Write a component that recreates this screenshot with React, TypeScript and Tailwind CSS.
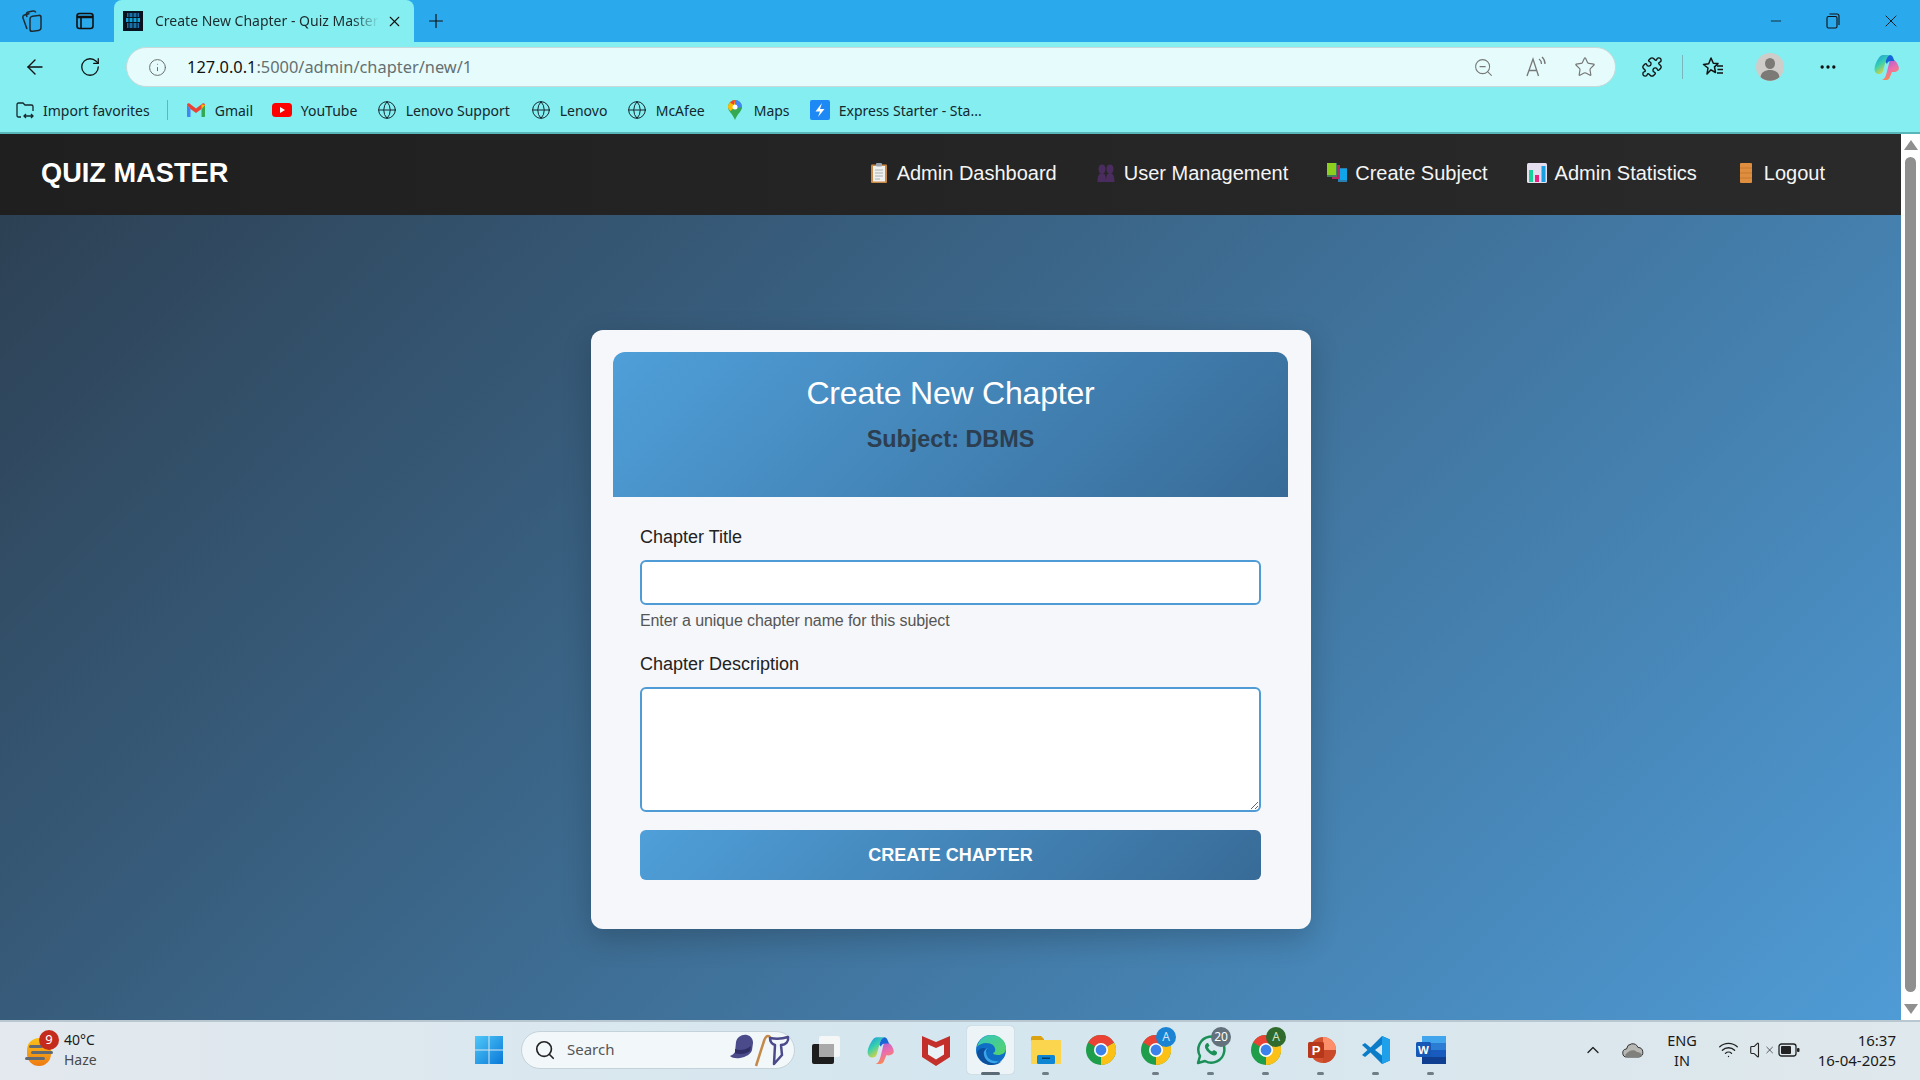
import React from "react";
import {
  ArrowLeft,
  ChevronUp,
  Globe,
  Info,
  Minus,
  MoreHorizontal,
  Plus,
  Puzzle,
  RotateCw,
  Search,
  Star,
  Volume,
  Wifi,
  X,
  ZoomOut,
} from "lucide-react";

const uiFont = "font-['Noto_Sans','Open_Sans',sans-serif]";

// Browser chrome drawings
const Workspaces = () => (
  <svg width="24" height="24" viewBox="0 0 24 24" fill="none" stroke="#1c2b33" strokeWidth="1.5">
    <rect x="10" y="6" width="11" height="15" rx="2.5" transform="skewY(-8) translate(0 3)" />
    <path d="M7 20 3 9c-.5-1.400.2-2.600 1.500-3l5-1.500" />
    <path d="M7 8 6.500 6c-.3-1.400.5-2.600 1.800-3l4.500-1c1.300-.3 2.500.3 3 1.500" />
  </svg>
);

const TabPanel = () => (
  <svg width="20" height="20" viewBox="0 0 20 20" fill="none" stroke="#111" strokeWidth="1.6">
    <rect x="2" y="2.500" width="16" height="15" rx="2.500" />
    <path d="M2 6h16" strokeWidth="2.500" />
    <path d="M6 6.500v11" />
  </svg>
);

const RestoreIcon = () => (
  <svg width="14" height="16" viewBox="0 0 14 16" fill="none" stroke="#111" strokeWidth="1.1">
    <rect x="1" y="3.500" width="10" height="11.500" rx="1.500" />
    <path d="M3.500 1h7.500c1.200 0 2 .8 2 2v9" />
  </svg>
);

const Favicon = () => (
  <svg width="20" height="20" viewBox="0 0 20 20">
    <rect width="20" height="20" fill="#07141f" />
    <rect x="4" y="2" width="12" height="4" fill="#1a6fa8" />
    <rect x="3" y="7" width="14" height="4" fill="#14a0d8" />
    <rect x="4" y="12" width="12" height="5" fill="#1a6fa8" />
    <path d="M6 2v15M10 2v15M14 2v15" stroke="#07141f" strokeWidth="1" />
  </svg>
);

const ReadAloud = () => (
  <svg width="24" height="24" viewBox="0 0 24 24" fill="none" stroke="#777" strokeWidth="1.300">
    <path d="M3 21 9 4l5.500 17M5 15.500h8" />
    <path d="M15 4c1.500 1 2.500 3 2.500 5M18 2c1.800 1.500 3 4 3 7" />
  </svg>
);

const FavoritesIcon = () => (
  <svg width="24" height="24" viewBox="0 0 24 24" fill="none" stroke="#111" strokeWidth="1.500">
    <path d="M10 3l2.300 5.200 4.700.4-3.500 3.300 1 5.600-4.500-2.700L6 19l1-6-4.500-3.500 5.200-.8z" strokeLinejoin="round" />
    <path d="M16 11h6M16.500 14.500H22M16 18h6" />
  </svg>
);

const ProfileIcon = () => (
  <svg width="28" height="28" viewBox="0 0 28 28">
    <circle cx="14" cy="14" r="14" fill="#cfcdc9" />
    <ellipse cx="14" cy="10.500" rx="5" ry="5.500" fill="#7c7a77" />
    <path d="M4.500 24c.8-5 4.500-7 9.500-7s8.700 2 9.500 7a14 14 0 0 1-19 0z" fill="#7c7a77" />
  </svg>
);

const CopilotIcon = ({ size = 28 }: { size?: number }) => (
  <svg width={size} height={size} viewBox="0 0 28 28">
    <defs>
      <linearGradient id="cpA" x1="0" y1="0" x2="0.600" y2="1">
        <stop offset="0" stopColor="#1b8fe8" />
        <stop offset="0.500" stopColor="#36d0b0" />
        <stop offset="1" stopColor="#f4d32f" />
      </linearGradient>
      <linearGradient id="cpB" x1="0" y1="0" x2="0.400" y2="1">
        <stop offset="0" stopColor="#a25be0" />
        <stop offset="0.600" stopColor="#ee6fa9" />
        <stop offset="1" stopColor="#f98b4a" />
      </linearGradient>
    </defs>
    <path d="M10 2h7c-2.500 1-3.500 3-4.500 7l-2.500 9c-.5 2-2 3-4 3-2.500 0-4.500-2-4.500-5 0-2 .5-4 1.500-6C5 6 7 2 10 2z" fill="url(#cpA)" />
    <path d="M18 7c3-.5 5 1 6.500 4 1.500 3 2 5 .5 6.500-2 2-4 1.500-6 1.500l-2.500 6c-.8 1.500-2 2-3.500 2h-4c2.500-1 3.500-3 4.500-6.500l2-8C16 10 16.500 7.500 18 7z" fill="url(#cpB)" />
    <path d="M12.500 9c1-4 2-6 4.500-7 1.500 0 2.500 1 3 2.500L21.500 8H18c-2 0-3.500 1-4 3z" fill="#1666d8" />
  </svg>
);

// Bookmark bar drawings
const ImportIcon = () => (
  <svg width="20" height="20" viewBox="0 0 20 20" fill="none" stroke="#14282e" strokeWidth="1.300">
    <path d="M6 17H3.500C2.500 17 2 16.500 2 15.500v-11C2 3.500 2.500 3 3.500 3H8l2 2h6.500c1 0 1.500.5 1.500 1.500V11" />
    <path d="M9 16h9M11 14l-2 2 2 2M16 14l2 2-2 2" />
  </svg>
);

const GmailIcon = () => (
  <svg width="20" height="20" viewBox="0 0 20 20">
    <path d="M1 5v11c0 .6.400 1 1 1h2.500V9z" fill="#4285f4" />
    <path d="M19 5v11c0 .6-.4 1-1 1h-2.500V9z" fill="#34a853" />
    <path d="M1 5c0-1.500 1.700-2.200 2.800-1.300L10 8.500l6.200-4.800C17.300 2.800 19 3.500 19 5l-3.500 4L10 13 4.500 9z" fill="#ea4335" />
    <path d="M15.500 4.300 19 5l-3.500 4z" fill="#fbbc04" />
  </svg>
);

const YoutubeIcon = () => (
  <svg width="20" height="20" viewBox="0 0 20 20">
    <rect y="3" width="20" height="14" rx="3.500" fill="#f00" />
    <path d="M8 7l5 3-5 3z" fill="#fff" />
  </svg>
);

const MapsIcon = () => (
  <svg width="16" height="20" viewBox="0 0 16 20">
    <path d="M8 0a7 7 0 0 1 7 7c0 4-4 6-7 13C5 13 1 11 1 7a7 7 0 0 1 7-7z" fill="#34a853" />
    <path d="M3 2.500A7 7 0 0 1 8 0v7L3.500 11C2 9.800 1 8.500 1 7c0-1.700.8-3.300 2-4.500z" fill="#fbbc04" />
    <path d="M3 2.500A7 7 0 0 1 8 0l-1 5z" fill="#ea4335" />
    <path d="M8 0a7 7 0 0 1 7 7l-5 1-2-3z" fill="#4285f4" />
    <circle cx="8" cy="7" r="2.500" fill="#fff" />
  </svg>
);

const ExpressIcon = () => (
  <svg width="20" height="20" viewBox="0 0 20 20">
    <rect width="20" height="20" rx="2" fill="#1e88f5" />
    <path d="M12 3 5.500 11.500H10L8 17l6.500-8H10z" fill="#fff" />
  </svg>
);

// Navbar emoji drawings
const ClipboardEmoji = () => (
  <svg width="18" height="20" viewBox="0 0 18 20">
    <rect x="1" y="1.500" width="16" height="18.500" rx="1" fill="#c98a45" />
    <rect x="3" y="3" width="12" height="15.500" fill="#f1f1ef" />
    <rect x="6" y="0" width="6" height="3.500" rx="1" fill="#9aa3ad" />
    <path d="M5 7h8M5 10h8M5 13h8M5 16h5" stroke="#a9b0b8" strokeWidth="1" />
  </svg>
);

const UsersEmoji = () => (
  <svg width="20" height="20" viewBox="0 0 20 20" fill="#4b2c5e">
    <ellipse cx="6" cy="6" rx="3.500" ry="4.500" />
    <ellipse cx="14" cy="6" rx="3.500" ry="4.500" />
    <path d="M1.500 19c0-5 1-9 4.500-9s4 4 4 9zM10 19c0-5 .5-9 4-9s4.500 4 4.500 9z" />
  </svg>
);

const BooksEmoji = () => (
  <svg width="20" height="20" viewBox="0 0 20 20">
    <rect x="11" y="5" width="9" height="14" fill="#2a7fb0" />
    <rect x="13" y="6" width="7" height="11" fill="#10a5e8" />
    <rect x="5" y="2" width="8" height="14" fill="#b3265f" />
    <rect x="0" y="0" width="10" height="14" fill="#3f7f5f" />
    <rect x="0" y="0" width="9" height="12" fill="#8ccf1e" />
  </svg>
);

const ChartEmoji = () => (
  <svg width="20" height="20" viewBox="0 0 20 20">
    <rect width="20" height="20" rx="1.500" fill="#e4deef" />
    <rect x="2" y="7" width="4" height="12" fill="#16d39a" />
    <rect x="8" y="12" width="4" height="7" fill="#e8237f" />
    <rect x="14.500" y="3" width="4" height="16" fill="#1a9fe0" />
  </svg>
);

const DoorEmoji = () => (
  <svg width="12" height="20" viewBox="0 0 12 20">
    <rect width="12" height="20" rx="1" fill="#de8e3e" />
    <path d="M0 5h12M0 10h12M0 15h12" stroke="#c27528" strokeWidth="0.800" />
  </svg>
);

// Taskbar drawings
const WindowsLogo = () => (
  <svg width="30" height="30" viewBox="0 0 30 30">
    <defs>
      <linearGradient id="winA" x1="0" y1="0" x2="1" y2="1">
        <stop offset="0" stopColor="#4fc8f8" />
        <stop offset="1" stopColor="#0a78d8" />
      </linearGradient>
    </defs>
    <path d="M1 1h13.500v13.500H1zM15.500 1H29v13.500H15.500zM1 15.500h13.500V29H1zM15.500 15.500H29V29H15.500z" fill="url(#winA)" />
  </svg>
);

const SearchDecor = () => (
  <svg width="62" height="34" viewBox="0 0 62 34">
    <path d="M7 9c1-5 6-8 11-7 4 1 6 4 6 8l-1 7c-1 4-6 7-12 8-4 .6-8 0-10-2 2-1 4-2 5-4z" fill="#4b4a8a" />
    <path d="M6 16c5 2 11 1 16-3l-1 5c-4 3-10 4-15 2z" fill="#2f2e66" />
    <path d="M27 33 35 8c1-3 2-5 4-5s3 2 2 4" fill="none" stroke="#c48a4a" strokeWidth="2.500" />
    <path d="M41 5c5 1 12 1 18-1 1 4-2 8-7 8l1 10-8 9 1-19c-3-1-5-4-5-7z" fill="none" stroke="#4b4a8a" strokeWidth="2.500" strokeLinejoin="round" />
  </svg>
);

const TaskView = () => (
  <svg width="30" height="30" viewBox="0 0 30 30">
    <rect x="1" y="9" width="22" height="20" rx="2" fill="#1d1d1d" />
    <rect x="8" y="1" width="21" height="21" rx="2" fill="#f5f6f6" />
    <rect x="8" y="9" width="15" height="13" fill="#a9a9a9" />
  </svg>
);

const McAfee = () => (
  <svg width="28" height="32" viewBox="0 0 28 32">
    <path d="M0 2l14 6 14-6v21l-14 9-14-9z" fill="#c32f2b" />
    <path d="M6 10.500l8 3.500 8-3.500v10L14 25.500 6 20.500z" fill="#e8f2f7" />
  </svg>
);

const Edge = () => (
  <svg width="32" height="32" viewBox="0 0 32 32">
    <defs>
      <linearGradient id="edgeA" x1="0" y1="0" x2="1" y2="1">
        <stop offset="0" stopColor="#36c5c0" />
        <stop offset="1" stopColor="#54d466" />
      </linearGradient>
    </defs>
    <circle cx="16" cy="16" r="15" fill="#0f6fc6" />
    <path d="M2 13C4 5 10 1 16 1c9 0 15 6 15 13 0 5-4 7-8 7-3 0-5-1-5-2 3-1 3-5 0-8-4-3-12-3-16 2z" fill="url(#edgeA)" />
    <path d="M13 16c-4 2-4 9 1 12 4 2 9 2 13-1-3 3-7 4-11 4C8 31 2 24 2 18c3-5 8-5 11-2z" fill="#0b4f9e" />
    <path d="M14 14c-2 0-4 3-2 8 1 3 6 6 12 5l-3 2c-6 1-11-3-12-8-1-4 2-7 5-7z" fill="#3aa6e8" />
  </svg>
);

const Files = () => (
  <svg width="30" height="30" viewBox="0 0 30 30">
    <path d="M0 3c0-1 .5-2 2-2h8l3 3v6H0z" fill="#dba10e" />
    <rect y="5" width="30" height="24" rx="1" fill="#fbd54e" />
    <rect x="6" y="20" width="18" height="9" rx="1.500" fill="#0e86d4" />
    <rect x="11" y="22.500" width="8" height="1.500" fill="#083e6b" />
  </svg>
);

const Chrome = () => (
  <svg width="30" height="30" viewBox="0 0 30 30">
    <circle cx="15" cy="15" r="15" fill="#1e9e4a" />
    <path d="M15 15 28 7.500A15 15 0 0 1 15 30z" fill="#fbc116" />
    <path d="M15 15 2 7.500A15 15 0 0 1 28 7.500z" fill="#ea4335" />
    <circle cx="15" cy="15" r="7" fill="#fff" />
    <circle cx="15" cy="15" r="5.400" fill="#3b82ea" />
  </svg>
);

const Whatsapp = () => (
  <svg width="30" height="30" viewBox="0 0 30 30" fill="none">
    <path d="M2 28l2-7A13 13 0 1 1 9 26z" stroke="#1b8f58" strokeWidth="2.500" strokeLinejoin="round" />
    <path d="M10 9c-2 2-1 5 2 8s6 4 8 3c1-1 1-2 1-3l-3-2-2 1.500c-2-1-3-2-4-4l1.500-2L12 8c-1 0-1.500 0-2 1z" fill="#1b8f58" />
  </svg>
);

const Powerpoint = () => (
  <svg width="30" height="30" viewBox="0 0 30 30">
    <circle cx="17" cy="15" r="13" fill="#d35230" />
    <path d="M17 2a13 13 0 0 1 13 13H17z" fill="#ff8f6b" />
    <path d="M17 15h13a13 13 0 0 1-13 13z" fill="#c9492a" />
    <rect x="2" y="7" width="16" height="16" rx="1.500" fill="#b7371a" />
    <text x="10" y="20" textAnchor="middle" fontSize="13" fontWeight="700" fill="#fff" fontFamily="Liberation Sans">P</text>
  </svg>
);

const VsCode = () => (
  <svg width="30" height="30" viewBox="0 0 30 30">
    <path d="M21 1 9.500 12.500 4 8 1 10l5.500 5L1 20l3 2 5.500-4.500L21 29l8-3.500v-21z" fill="#0a7cc8" />
    <path d="M21 1l8 3.500v21L21 29z" fill="#1fa0ea" />
    <path d="M21 9.500 14 15l7 5.500z" fill="#d5e7f0" />
  </svg>
);

const Word = () => (
  <svg width="30" height="30" viewBox="0 0 30 30">
    <rect x="6" y="1" width="24" height="7" fill="#41a5ee" />
    <rect x="6" y="8" width="24" height="7" fill="#2b7cd3" />
    <rect x="6" y="15" width="24" height="7" fill="#185abd" />
    <rect x="6" y="22" width="24" height="7" fill="#103f91" />
    <rect x="0" y="7" width="15" height="15" rx="1.500" fill="#1558b5" />
    <text x="7.500" y="19" textAnchor="middle" fontSize="11.500" fontWeight="700" fill="#fff" fontFamily="Liberation Sans">W</text>
  </svg>
);

const Cloud = () => (
  <svg width="22" height="16" viewBox="0 0 22 16">
    <path d="M5 15a4 4 0 0 1-.5-8A6 6 0 0 1 16 5.500 4.800 4.800 0 0 1 17 15z" fill="#b7b7b4" stroke="#333" strokeWidth="1" />
    <path d="M3 13c4-5 9-6 12-3 2 0 4 1 5 3-.5 1.500-2 2-3 2H5z" fill="#7f7f7c" />
  </svg>
);

const BatteryIcon = () => (
  <svg width="22" height="16" viewBox="0 0 22 16" fill="none">
    <rect x="1" y="2" width="17" height="12" rx="2.500" stroke="#222" strokeWidth="1.300" />
    <rect x="3" y="4" width="10" height="8" rx="1" fill="#222" />
    <rect x="19" y="6" width="2.500" height="4" rx="1" fill="#222" />
  </svg>
);

const bookmarks: { icon: React.ReactNode; label: string; w: string }[] = [
  { icon: <GmailIcon />, label: "Gmail", w: "w-[86px] ml-[18px]" },
  { icon: <YoutubeIcon />, label: "YouTube", w: "w-[105px]" },
  { icon: <Globe size={20} strokeWidth={1.2} color="#14282e" />, label: "Lenovo Support", w: "w-[154px]" },
  { icon: <Globe size={20} strokeWidth={1.2} color="#14282e" />, label: "Lenovo", w: "w-[96px]" },
  { icon: <Globe size={20} strokeWidth={1.2} color="#14282e" />, label: "McAfee", w: "w-[97px]" },
  { icon: <MapsIcon />, label: "Maps", w: "w-[86px] pl-[1px]" },
  { icon: <ExpressIcon />, label: "Express Starter - Sta...", w: "w-[180px]" },
];

const navLinks: { icon: React.ReactNode; label: string }[] = [
  { icon: <ClipboardEmoji />, label: "Admin Dashboard" },
  { icon: <UsersEmoji />, label: "User Management" },
  { icon: <BooksEmoji />, label: "Create Subject" },
  { icon: <ChartEmoji />, label: "Admin Statistics" },
  { icon: <DoorEmoji />, label: "Logout" },
];

const taskbarApps: { icon: React.ReactNode; running?: boolean; active?: boolean; badge?: React.ReactNode }[] = [
  { icon: <TaskView /> },
  { icon: <CopilotIcon size={30} /> },
  { icon: <McAfee /> },
  { icon: <Edge />, active: true },
  { icon: <Files />, running: true },
  { icon: <Chrome /> },
  {
    icon: <Chrome />,
    running: true,
    badge: <span className="bg-[#1a83d4] text-[#cfe6f7]">A</span>,
  },
  {
    icon: <Whatsapp />,
    running: true,
    badge: <span className="bg-[#62717b] text-white">20</span>,
  },
  {
    icon: <Chrome />,
    running: true,
    badge: <span className="bg-[#2f6b2c] text-[#cfe3c8]">A</span>,
  },
  { icon: <Powerpoint />, running: true },
  { icon: <VsCode />, running: true },
  { icon: <Word />, running: true },
];

const BrowserChrome = () => (
  <div className={uiFont}>
    {/* Tab strip */}
    <div className="flex h-[42px] items-center bg-[#2aa9ec]">
      <div className="ml-[20px] flex w-[24px] justify-center"><Workspaces /></div>
      <div className="ml-[31px] flex w-[20px] justify-center"><TabPanel /></div>
      <div className="ml-[19px] flex h-[42px] w-[300px] items-center self-end rounded-t-lg bg-[#84eef0] pl-[9px]">
        <Favicon />
        <span className="-mt-[1px] ml-[12px] w-[224px] overflow-hidden whitespace-nowrap text-[14px] text-[#1d2b2e] [mask-image:linear-gradient(to_right,black_88%,transparent)]">
          Create New Chapter - Quiz Master
        </span>
        <X size={17} strokeWidth={1.5} color="#111" className="ml-[7px]" />
      </div>
      <Plus size={22} strokeWidth={1.3} color="#111" className="ml-[11px]" />
      <div className="ml-auto flex items-center">
        <Minus size={16} strokeWidth={1.2} color="#111" />
        <div className="ml-[42px] flex w-[14px]"><RestoreIcon /></div>
        <X size={20} strokeWidth={1.1} color="#111" className="ml-[41px] mr-[19px]" />
      </div>
    </div>

    {/* Address bar */}
    <div className="flex h-[50px] items-center bg-[#84eef0]">
      <ArrowLeft size={24} strokeWidth={1.4} color="#111" className="ml-[23px]" />
      <RotateCw size={22} strokeWidth={1.4} color="#111" className="ml-[32px]" />
      <div className="ml-[25px] flex h-[40px] w-[1490px] items-center rounded-full border border-[#c9d9da] bg-[#e6fcfc] pl-[21px] pr-[19px]">
        <Info size={19} strokeWidth={1.2} color="#666" />
        <span className="ml-[20px] text-[16.400px] text-[#656f71]">
          <span className="text-[#111]">127.0.0.1</span>:5000/admin/chapter/new/1
        </span>
        <div className="ml-auto flex items-center gap-[26px]">
          <ZoomOut size={21} strokeWidth={1.2} color="#777" className="mr-[4px]" />
          <ReadAloud />
          <Star size={22} strokeWidth={1.3} color="#777" />
        </div>
      </div>
      <Puzzle size={22} strokeWidth={1.5} color="#111" className="ml-[25px]" />
      <div className="ml-[19px] h-[24px] w-[1px] bg-[#7cb6bc]" />
      <div className="ml-[18px]"><FavoritesIcon /></div>
      <div className="ml-[31px]"><ProfileIcon /></div>
      <MoreHorizontal size={20} strokeWidth={2} color="#111" className="ml-[34px]" />
      <div className="ml-[35px]"><CopilotIcon /></div>
    </div>

    {/* Favorites bar */}
    <div className="flex h-[42px] items-center border-b-2 border-[#5ab5b8] bg-[#84eef0] pb-[4px] text-[14px] text-[#14282e]">
      <div className="ml-[15px] flex items-center gap-[8px]">
        <ImportIcon />
        <span>Import favorites</span>
      </div>
      <div className="ml-[17px] h-[20px] w-[1px] bg-[#6fb0b4]" />
      {bookmarks.map((b) => (
        <div key={b.label} className={`flex items-center gap-[9px] ${b.w}`}>
          <div className="flex w-[20px] shrink-0 justify-center">{b.icon}</div>
          <span className="whitespace-nowrap">{b.label}</span>
        </div>
      ))}
    </div>
  </div>
);

const Navbar = () => (
  <header className="flex h-[81px] items-center justify-between bg-gradient-to-r from-[#1f1f1f] to-[#2a2a2a] pb-[3px] pl-[41px] pr-[76px] text-white">
    <div className="text-[27.200px] font-bold">QUIZ MASTER</div>
    <nav className="flex items-center gap-[37px]">
      {navLinks.map((link) => (
        <a key={link.label} href="#" className="flex items-center gap-[6px] text-[20px] text-[#f5f5f5]">
          <span className="flex w-[24px] justify-center">{link.icon}</span>
          {link.label}
        </a>
      ))}
    </nav>
  </header>
);

const ChapterForm = () => (
  <div className="ml-[591px] mt-[115px] w-[720px] rounded-xl bg-[#f5f7fa] p-[22px] shadow-[0_10px_30px_rgba(0,0,0,0.2)]">
    <div className="h-[145px] w-[675px] rounded-t-xl bg-[linear-gradient(135deg,#4f9fd9,#386b97)] pt-[19px] text-center">
      <h1 className="text-[32px] leading-[44px] tracking-[-0.2px] text-white">Create New Chapter</h1>
      <h2 className="mt-[11px] text-[23.400px] font-bold leading-[26px] text-[#2c3e50]">Subject: DBMS</h2>
    </div>
    <form className="w-[675px] px-[27px] pt-[29px]">
      <label className="block text-[18px] leading-[22px] text-[#222]">Chapter Title</label>
      <input
        type="text"
        className="mt-[12px] block h-[45px] w-full rounded-md border-2 border-[#4f9bd5] bg-white px-3 outline-none"
      />
      <p className="mt-[6px] text-[16px] leading-[20px] tracking-[-0.1px] text-[#555]">Enter a unique chapter name for this subject</p>
      <label className="mt-[22px] block text-[18px] leading-[22px] text-[#222]">Chapter Description</label>
      <textarea className="mt-[12px] block h-[125px] w-full rounded-md border-2 border-[#4f9bd5] bg-white px-3 py-2 outline-none" />
      <button
        type="button"
        className="mb-[27px] mt-[18px] block h-[50px] w-full rounded-md bg-[linear-gradient(135deg,#4f9fd9,#386b97)] text-[18px] font-bold text-white"
      >
        CREATE CHAPTER
      </button>
    </form>
  </div>
);

const Scrollbar = () => (
  <div className="flex w-[19px] shrink-0 flex-col items-center bg-white py-[6px]">
    <div className="h-0 w-0 border-x-[7px] border-b-[10px] border-x-transparent border-b-[#8f8f8f]" />
    <div className="mb-[-2px] mt-[7px] w-[11px] flex-1 rounded-full bg-[#8f8f8f]" />
    <div className="mt-[14px] h-0 w-0 border-x-[7px] border-t-[10px] border-x-transparent border-t-[#8f8f8f]" />
  </div>
);

const Taskbar = () => (
  <footer
    className={`${uiFont} relative flex h-[60px] items-center border-t-2 border-[#b9c8d0] bg-gradient-to-r from-[#e3e9ee] via-[#d4e6ef] to-[#dfe8ec] pb-[3px] text-[#1a1a1a]`}
  >
    {/* Weather */}
    <div className="relative ml-[25px] h-[32px] w-[28px]">
      <div className="absolute left-[2px] top-[4px] h-[28px] w-[24px] rounded-full bg-gradient-to-b from-[#f9c21a] to-[#ee7a12]" />
      <div className="absolute left-[4px] top-[11px] h-[3px] w-[14px] rounded bg-[#5f6a74]" />
      <div className="absolute left-[6px] top-[17px] h-[3px] w-[22px] rounded bg-[#5f6a74]" />
      <div className="absolute left-0 top-[23px] h-[3px] w-[20px] rounded bg-[#5f6a74]" />
      <div className="absolute left-[14px] top-[-4px] flex h-[20px] w-[20px] items-center justify-center rounded-full bg-[#c42b1c] text-[13px] text-white">
        9
      </div>
    </div>
    <div className="ml-[11px] w-[40px] text-[14px] leading-[20px]">
      <div>40°C</div>
      <div className="text-[#4a4a4a]">Haze</div>
    </div>

    <div className="ml-[370px] flex"><WindowsLogo /></div>

    <div className="ml-[17px] flex h-[38px] w-[274px] items-center rounded-full border border-[#c4d2da] bg-[#f2f7fa] pl-[12px] pr-[3px]">
      <Search size={22} strokeWidth={1.8} color="#222" />
      <span className="ml-[11px] text-[15px] text-[#555]">Search</span>
      <div className="ml-auto flex"><SearchDecor /></div>
    </div>

    <div className="ml-[3px] flex">
      {taskbarApps.map((app, i) => (
        <div key={i} className="relative flex h-[48px] w-[55px] items-center justify-center">
          {app.active && (
            <div className="absolute inset-y-0 left-[4px] right-[4px] rounded bg-[#ecf4f8] shadow-[0_0_1px_rgba(0,0,0,0.25)]" />
          )}
          <div className="relative flex h-[32px] w-[32px] items-center justify-center">{app.icon}</div>
          {app.badge && (
            <div className="absolute left-[28px] top-[1px] flex [&>span]:flex [&>span]:h-[20px] [&>span]:min-w-[20px] [&>span]:items-center [&>span]:justify-center [&>span]:rounded-full [&>span]:px-[2px] [&>span]:text-[12px]">
              {app.badge}
            </div>
          )}
          {app.running && (
            <div className="absolute bottom-[-1px] left-[24px] h-[3px] w-[7px] rounded-full bg-[#6f7d85]" />
          )}
          {app.active && (
            <div className="absolute bottom-[-1px] left-[18px] h-[3px] w-[19px] rounded-full bg-[#5a6b76]" />
          )}
        </div>
      ))}
    </div>

    {/* Tray */}
    <div className="ml-auto flex items-center pr-[24px] text-[14px]">
      <ChevronUp size={20} strokeWidth={1.6} color="#222" />
      <div className="ml-[19px] flex"><Cloud /></div>
      <div className="ml-[20px] w-[36px] text-center text-[14.500px] leading-[20px]">
        <div>ENG</div>
        <div>IN</div>
      </div>
      <Wifi size={21} strokeWidth={1.5} color="#222" className="ml-[18px]" />
      <div className="ml-[10px] flex w-[26px] items-center">
        <Volume size={22} strokeWidth={1.3} color="#222" />
        <X size={12} strokeWidth={1.5} color="#222" className="-ml-[6px]" />
      </div>
      <div className="ml-[3px] flex"><BatteryIcon /></div>
      <div className="ml-[16px] w-[80px] text-right text-[15px] leading-[20px]">
        <div>16:37</div>
        <div className="whitespace-nowrap">16-04-2025</div>
      </div>
    </div>
  </footer>
);

const App: React.FC = () => {
  return (
    <div className="flex h-screen w-full flex-col overflow-hidden font-['Liberation_Sans',Arial,sans-serif]">
      <BrowserChrome />
      <div className="flex min-h-0 flex-1">
        <div className="flex min-w-0 flex-1 flex-col bg-[linear-gradient(135deg,#2c3e50,#4f9bd5)]">
          <Navbar />
          <ChapterForm />
        </div>
        <Scrollbar />
      </div>
      <Taskbar />
    </div>
  );
};

export default App;
